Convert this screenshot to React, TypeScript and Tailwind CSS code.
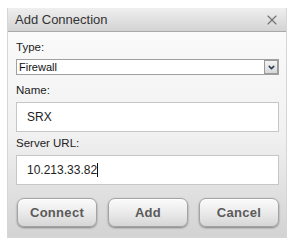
import { X, ChevronDown } from 'lucide-react';

const font = { fontFamily: '"Liberation Sans", Arial, sans-serif' };

function DialogButton({ label }: { label: string }) {
  return (
    <button
      type="button"
      className="w-[80px] h-[29px] rounded-[7px] border border-[#a3a3a3] bg-gradient-to-b from-[#fbfbfb] via-[#ebebeb] to-[#d6d6d6] shadow-[inset_0_1px_0_#fff,0_1px_2px_rgba(0,0,0,0.4)] text-[13px] font-bold text-[#5a5a5a] tracking-[0.3px]"
    >
      {label}
    </button>
  );
}

export default function App() {
  return (
    <div className="w-[302px] h-[246px] bg-white pt-[8px] pl-[7px]" style={font}>
      <div className="w-[280px] h-[230px] flex flex-col border border-[#d6d6d6] border-t-0">
        <div className="h-[24px] flex items-center justify-between pl-[7px] pr-[6px] bg-gradient-to-b from-[#efefef] to-[#d3d3d3] border-b border-[#a8a8a8]">
          <span className="text-[13px] text-[#333]">Add Connection</span>
          <X className="w-[16px] h-[16px] text-[#707070]" strokeWidth={1.6} />
        </div>

        <div className="flex-1 flex flex-col pl-[8px] pr-[7px] bg-gradient-to-b from-[#fafafa] via-[#f1f1f1] to-[#d3d3d3]">
          <div className="mt-[8px] h-[14px] text-[11.5px] leading-[14px] text-[#222]">Type:</div>
          <div className="mt-[5px] h-[16px] flex items-center border border-[#a0a0a0] bg-white">
            <span className="flex-1 pl-[2px] text-[11px] leading-[13px] text-[#111]">Firewall</span>
            <div className="w-[14px] h-[14px] flex items-center justify-center bg-gradient-to-b from-[#f4f4f4] to-[#d8d8d8] border border-[#9a9a9a]">
              <ChevronDown className="w-[9px] h-[9px] text-[#2a3a55]" strokeWidth={4} />
            </div>
          </div>

          <div className="mt-[8px] h-[14px] text-[11.5px] leading-[14px] text-[#222]">Name:</div>
          <div className="mt-[5px] h-[30px] flex items-center pl-[10px] border border-[#c6c6c6] bg-white text-[12px] text-[#222]">
            SRX
          </div>

          <div className="mt-[4px] h-[14px] text-[11.5px] leading-[14px] text-[#222]">Server URL:</div>
          <div className="mt-[5px] h-[30px] flex items-center pl-[10px] border border-[#c6c6c6] bg-white text-[12px] text-[#222]">
            10.213.33.82
            <span className="w-px h-[14px] bg-[#111]" />
          </div>

          <div className="mt-[13px] pl-[1px] flex gap-[11px]">
            <DialogButton label="Connect" />
            <DialogButton label="Add" />
            <DialogButton label="Cancel" />
          </div>
        </div>
      </div>
    </div>
  );
}
